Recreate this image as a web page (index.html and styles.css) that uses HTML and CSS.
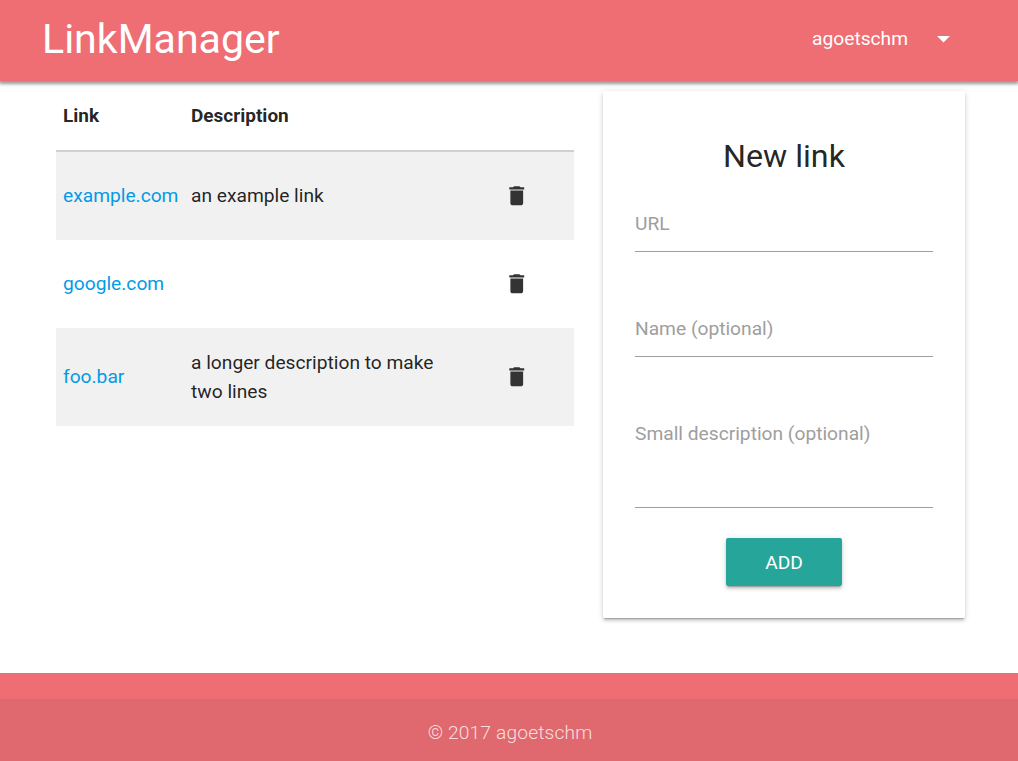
FILE: index.html
```html
<!DOCTYPE html>
<html lang="en">
<head>
<meta charset="utf-8">
<title>LinkManager</title>
<link rel="stylesheet" href="styles.css">
</head>
<body>
<header class="nav">
  <a class="brand">LinkManager</a>
  <a class="user"><span>agoetschm</span><svg class="caret" viewBox="0 0 24 24"><path d="M7 10l5 5 5-5z"/></svg></a>
</header>
<main class="main">
  <table class="links">
    <thead><tr><th class="c-link">Link</th><th class="c-desc">Description</th><th></th></tr></thead>
    <tbody>
      <tr class="odd"><td><a>example.com</a></td><td>an example link</td><td class="action"><svg class="trash" viewBox="0 0 24 24"><path d="M6 19c0 1.100.9 2 2 2h8c1.100 0 2-.9 2-2V7H6v12zM19 4h-3.500l-1-1h-5l-1 1H5v2h14V4z"/></svg></td></tr>
      <tr><td><a>google.com</a></td><td></td><td class="action"><svg class="trash" viewBox="0 0 24 24"><path d="M6 19c0 1.100.9 2 2 2h8c1.100 0 2-.9 2-2V7H6v12zM19 4h-3.500l-1-1h-5l-1 1H5v2h14V4z"/></svg></td></tr>
      <tr class="odd tall"><td><a>foo.bar</a></td><td class="multi">a longer description to make two lines</td><td class="action"><svg class="trash" viewBox="0 0 24 24"><path d="M6 19c0 1.100.9 2 2 2h8c1.100 0 2-.9 2-2V7H6v12zM19 4h-3.500l-1-1h-5l-1 1H5v2h14V4z"/></svg></td></tr>
    </tbody>
  </table>
  <form class="card">
    <h1 class="title">New link</h1>
    <label class="field">URL</label>
    <label class="field">Name (optional)</label>
    <label class="field area">Small description (optional)</label>
    <button class="add" type="button">ADD</button>
  </form>
</main>
<footer class="footer"><div class="copy">© 2017 agoetschm</div></footer>
</body>
</html>
```
FILE: styles.css
```css
* { box-sizing: border-box; }
body {
  margin: 0;
  height: 761px;
  display: flex;
  flex-direction: column;
  font: 19.2px/29px Roboto, sans-serif;
  color: rgba(0, 0, 0, .87);
  background: #fff;
  overflow: hidden;
}
.card, .add {
  box-shadow: 0 3px 3px 0 rgba(0,0,0,.14), 0 1px 7px 0 rgba(0,0,0,.12), 0 3px 1px -2px rgba(0,0,0,.2);
}
.nav {
  height: 81px;
  flex: none;
  display: flex;
  align-items: center;
  justify-content: space-between;
  padding: 0 59px 4px 42px;
  background: #ee6e73;
  color: #fff;
  box-shadow: 0 2px 3px 1px rgba(0,0,0,.34), 0 1px 6px 0 rgba(0,0,0,.16);
}
.brand { padding-top: 2px; font-size: 41.1px; line-height: 75px; }
.user { display: flex; align-items: center; }
.caret { width: 31px; height: 31px; margin-left: 20px; fill: #fff; }
.main {
  flex: 1;
  display: flex;
  align-items: flex-start;
  padding: 0 53px 0 56px;
}
.links {
  width: 518px;
  table-layout: fixed;
  border-spacing: 0;
  text-align: left;
}
.links th { height: 71px; padding: 0 7px; font-size: 19px; font-weight: 700; border-bottom: 2px solid #d0d0d0; }
.c-link { width: 128px; }
.c-desc { width: 258px; }
.links td { height: 88px; padding: 0 7px 2px; }
.links .tall td { height: 98px; }
.links .multi, .links .action { padding-bottom: 0; }
.odd { background: #f1f1f1; }
.links a { color: #039be5; }
.trash { display: block; width: 25.5px; height: 25.5px; margin-left: 54.5px; fill: #333; }
.card {
  width: 362px;
  height: 527px;
  margin: 10px 0 0 29px;
  padding: 44px 32px 0;
  border-radius: 2px;
  background: #fff;
}
.title { margin: 0 0 26px; font-size: 32.2px; line-height: 43px; font-weight: 400; text-align: center; }
.field {
  display: block;
  height: 48px;
  margin-bottom: 57px;
  padding-top: 5px;
  color: #9e9e9e;
  border-bottom: 1px solid #9e9e9e;
}
.area { height: 94px; margin-bottom: 30px; }
.add {
  display: block;
  width: 116px;
  height: 48px;
  margin: 0 auto;
  padding: 1px 0 0;
  border: 0;
  border-radius: 2px;
  font: 19.2px Roboto, sans-serif;
  letter-spacing: 0;
  color: #fff;
  background: #26a69a;
}
.footer { flex: none; height: 88px; padding-top: 26px; background: #ee6e73; }
.copy {
  height: 62px;
  padding: 5px 0 0 2px;
  line-height: 58px;
  font-weight: 300;
  letter-spacing: .15px;
  text-align: center;
  color: rgba(255,255,255,.8);
  background: rgba(51,51,51,.08);
}
```
